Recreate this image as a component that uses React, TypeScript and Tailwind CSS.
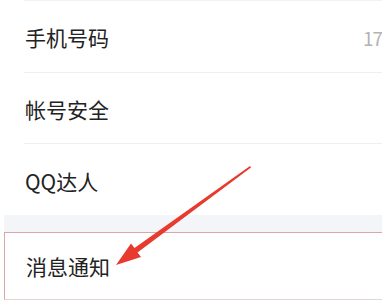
import React from "react";

export default function App() {
  const font = { fontFamily: '"Noto Sans CJK SC", "Noto Sans", sans-serif' };
  return (
    <div className="relative w-[382px] h-[302px] overflow-hidden bg-white" style={font}>
      <div className="h-px bg-[#f2f2f2] ml-[24px]" />
      <div className="flex items-center h-[71px] pl-[25px] pt-[1px]">
        <span className="text-[21px] leading-none text-[#222]">手机号码</span>
        <span className="ml-auto text-[19px] leading-none text-[#b3b3b3] tracking-[-1px]">17</span>
      </div>
      <div className="h-px bg-[#eeeeee] ml-[24px]" />
      <div className="flex items-center h-[70px] pl-[25px] pt-[2px]">
        <span className="text-[21px] leading-none text-[#222]">帐号安全</span>
      </div>
      <div className="h-px bg-[#eeeeee] ml-[24px]" />
      <div className="flex items-center h-[71px] pl-[25px] pt-[3px]">
        <span className="text-[21px] leading-none text-[#222]">QQ达人</span>
      </div>
      <div className="h-[17px] bg-[#f3f5f8] ml-[4px]" />
      <div className="flex items-center h-[68px] ml-[4px] -mr-[4px] pl-[21px] border border-[#dda6a6] border-b-[#e2d6d6]">
        <span className="text-[21px] leading-none text-[#222]">消息通知</span>
      </div>
      <svg className="absolute left-0 top-0 pointer-events-none" width="382" height="302" viewBox="0 0 382 302">
        <polygon
          points="250,166 251,167.5 137.5,252.5 141,257 116,265 131,243.5 134.5,248"
          fill="#e63b2e"
        />
      </svg>
    </div>
  );
}
